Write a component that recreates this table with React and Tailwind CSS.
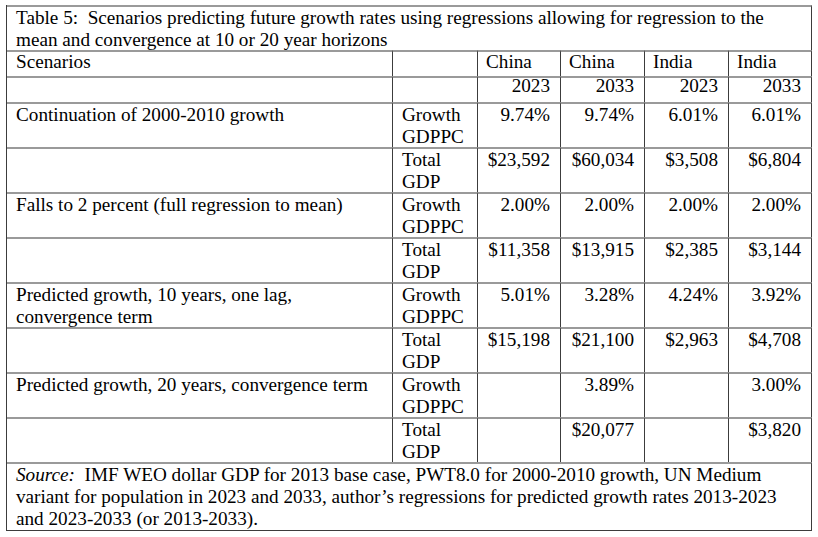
import React from "react";

// Scenario rows: growth line then total GDP line
const scenarios = [
  {
    label: ["Continuation of 2000-2010 growth"],
    growth: ["9.74%", "9.74%", "6.01%", "6.01%"],
    total: ["$23,592", "$60,034", "$3,508", "$6,804"],
  },
  {
    label: ["Falls to 2 percent (full regression to mean)"],
    growth: ["2.00%", "2.00%", "2.00%", "2.00%"],
    total: ["$11,358", "$13,915", "$2,385", "$3,144"],
  },
  {
    label: ["Predicted growth, 10 years, one lag,", "convergence term"],
    growth: ["5.01%", "3.28%", "4.24%", "3.92%"],
    total: ["$15,198", "$21,100", "$2,963", "$4,708"],
  },
  {
    label: ["Predicted growth, 20 years, convergence term"],
    growth: ["", "3.89%", "", "3.00%"],
    total: ["", "$20,077", "", "$3,820"],
  },
];

const cell = "border-t-2 border-t-[#9a9a9a] border-r border-r-[#3c3c3c]";

const Row = ({ h, label, kind, values }) => (
  <>
    <div className={`${cell} ${h} pl-[9px] whitespace-nowrap`}>
      {label.map((l, i) => (
        <div key={i}>{l}</div>
      ))}
    </div>
    <div className={`${cell} ${h} pl-[9px] whitespace-nowrap`}>
      {kind === "growth" ? (
        <>
          <div>Growth</div>
          <div>GDPPC</div>
        </>
      ) : (
        <>
          <div>Total</div>
          <div>GDP</div>
        </>
      )}
    </div>
    {values.map((v, i) => (
      <div key={i} className={`${cell} ${h} pr-[10px] text-right whitespace-nowrap`}>
        {v}
      </div>
    ))}
  </>
);

export default function App() {
  return (
    <div className="w-[818px] h-[537px] bg-white text-black font-['Liberation_Serif',serif] text-[19.2px] leading-[22px] pt-[5px] pl-[6px]">
      <div className="grid grid-cols-[386px_85px_83px_84px_84px_83px] w-fit border-l border-l-[#3c3c3c] border-b border-b-[#3c3c3c]">
        <div className={`${cell} col-span-6 h-[45px] pl-[9px] whitespace-pre`}>
          <div>Table 5:  Scenarios predicting future growth rates using regressions allowing for regression to the</div>
          <div>mean and convergence at 10 or 20 year horizons</div>
        </div>

        <div className={`${cell} h-[26px] pl-[9px] leading-[19px]`}>Scenarios</div>
        <div className={`${cell} h-[26px]`}></div>
        {["China", "China", "India", "India"].map((c, i) => (
          <div key={i} className={`${cell} h-[26px] pl-[8px] leading-[19px]`}>
            {c}
          </div>
        ))}

        <div className={`${cell} h-[26px]`}></div>
        <div className={`${cell} h-[26px]`}></div>
        {["2023", "2033", "2023", "2033"].map((y, i) => (
          <div key={i} className={`${cell} h-[26px] pr-[10px] text-right leading-[15px]`}>
            {y}
          </div>
        ))}

        {scenarios.map((s, i) => (
          <React.Fragment key={i}>
            <Row h="h-[45px]" label={s.label} kind="growth" values={s.growth} />
            <Row h="h-[45px]" label={[]} kind="total" values={s.total} />
          </React.Fragment>
        ))}

        <div className={`${cell} col-span-6 h-[68px] pl-[9px] whitespace-pre`}>
          <div>
            <i>Source:</i>  IMF WEO dollar GDP for 2013 base case, PWT8.0 for 2000-2010 growth, UN Medium
          </div>
          <div>variant for population in 2023 and 2033, author’s regressions for predicted growth rates 2013-2023</div>
          <div>and 2023-2033 (or 2013-2033).</div>
        </div>
      </div>
    </div>
  );
}
